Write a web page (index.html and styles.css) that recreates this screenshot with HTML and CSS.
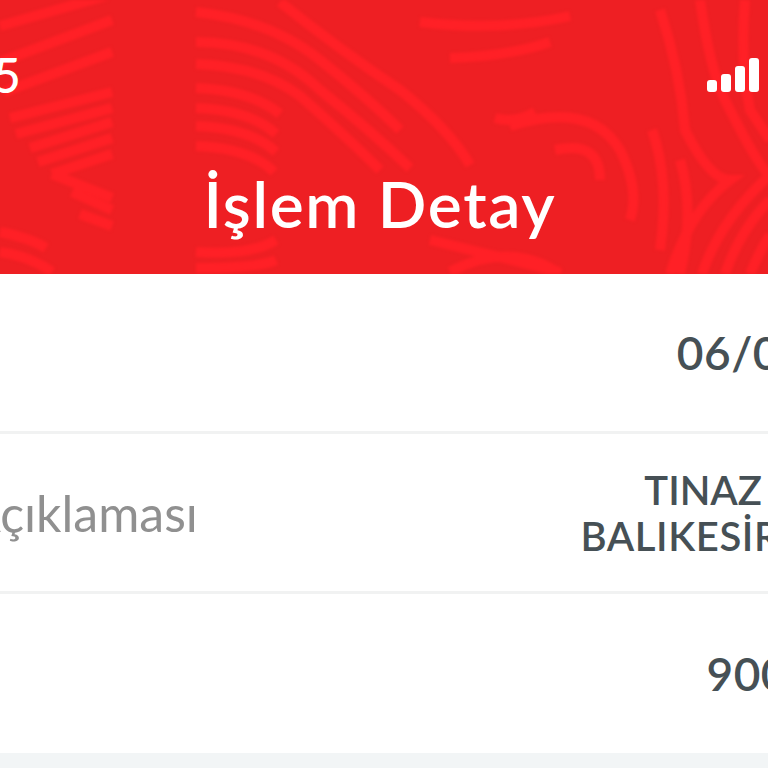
FILE: index.html
```html
<!DOCTYPE html>
<html lang="tr">
<head>
    <meta charset="UTF-8">
    <meta name="viewport" content="width=device-width, initial-scale=1.0">
    <title>İşlem Detay</title>
    <link rel="stylesheet" href="styles.css">
</head>
<body>
    <div class="screen">
        <header class="header">
            <svg class="header-pattern" width="800" height="274" viewBox="0 0 800 274" fill="none">
                <g stroke="#ff2026" stroke-width="10">
                    <path d="M20 26 L132 -6"/>
                    <path d="M20 62 L132 20"/>
                    <path d="M24 92 L132 52"/>
                    <path d="M30 118 L132 92"/>
                    <path d="M36 134 L132 108"/>
                    <path d="M50 148 L132 122"/>
                    <path d="M58 162 L132 138"/>
                    <path d="M72 174 L132 154 M72 174 L132 198"/>
                    <path d="M92 192 L132 210"/>
                    <path d="M100 214 L132 226"/>
                    <path d="M20 232 Q50 238 66 248"/>
                    <path d="M20 252 Q50 256 72 272"/>
                    <path d="M216 12 Q290 20 340 60 Q390 100 420 130"/>
                    <path d="M216 42 Q290 42 340 90 Q390 130 430 168"/>
                    <path d="M216 64 Q280 66 320 96 Q370 140 400 170"/>
                    <path d="M216 88 Q270 90 300 114"/>
                    <path d="M216 108 Q270 110 296 134"/>
                    <path d="M216 126 Q270 128 296 152"/>
                    <path d="M216 146 Q270 148 294 172"/>
                    <path d="M216 252 Q270 256 296 240"/>
                    <path d="M216 268 Q280 268 296 260"/>
                    <path d="M300 2 Q360 50 420 90 Q470 130 490 165"/>
                    <path d="M440 22 Q520 32 590 16"/>
                    <path d="M470 58 Q530 56 570 42"/>
                    <path d="M515 118 Q535 124 555 112"/>
                    <path d="M530 126 Q610 100 640 150 Q660 190 650 220"/>
                    <path d="M575 150 Q620 140 620 180"/>
                    <path d="M672 130 Q690 180 680 250"/>
                    <path d="M700 160 Q715 210 700 274"/>
                    <path d="M680 10 Q700 70 705 130 Q730 180 750 180 Q710 210 690 274"/>
                    <path d="M720 0 Q730 70 745 100 Q780 170 790 175 Q740 220 722 274"/>
                    <path d="M765 0 Q760 60 770 110 L790 140"/>
                    <path d="M745 274 Q760 230 790 200"/>
                    <path d="M770 274 Q780 250 790 235"/>
                    <path d="M470 272 Q530 240 580 274 M450 240 L580 272"/>
                </g>
            </svg>
            <div class="status-bar">
                <span class="status-time">5</span>
                <div class="signal">
                    <span class="signal-bar bar-1"></span>
                    <span class="signal-bar bar-2"></span>
                    <span class="signal-bar bar-3"></span>
                    <span class="signal-bar bar-4"></span>
                </div>
            </div>
            <h1 class="title">İşlem Detay</h1>
        </header>

        <div class="detail-row">
            <div class="detail-label"></div>
            <div class="detail-value value-large">06/0</div>
        </div>
        <div class="detail-row">
            <div class="detail-label label-clipped">Açıklaması</div>
            <div class="detail-value">
                <div class="value-line-short">TINAZ</div>
                <div class="value-line-long">BALIKESİR</div>
            </div>
        </div>
        <div class="detail-row">
            <div class="detail-label"></div>
            <div class="detail-value value-large value-amount">900</div>
        </div>
        <div class="footer-area"></div>
    </div>
</body>
</html>
```

FILE: styles.css
```css
html, body {
    margin: 0;
    padding: 0;
    height: 100%;
    overflow: hidden;
    background-color: #fff;
    font-family: 'Lato', 'Noto Sans', sans-serif;
}

.screen {
    width: 800px;
    height: 768px;
    margin-left: -20px;
    display: flex;
    flex-direction: column;
}

.header {
    position: relative;
    height: 274px;
    flex-shrink: 0;
    background-color: #ee1f23;
    color: #fff;
    overflow: hidden;
}

.header-pattern {
    position: absolute;
    top: 0;
    left: 0;
    filter: blur(1.5px);
}

.status-bar {
    position: relative;
    display: flex;
    justify-content: space-between;
    align-items: flex-end;
    height: 92px;
    padding: 0 21px 0 13px;
}

.status-time {
    font-size: 48px;
    line-height: 46px;
    font-weight: 500;
    margin-bottom: -6px;
}

.signal {
    display: flex;
    align-items: flex-end;
    gap: 4px;
}

.signal-bar {
    width: 10px;
    background-color: #fff;
    border-radius: 3px;
}

.bar-1 { height: 12px; }
.bar-2 { height: 18px; }
.bar-3 { height: 26px; }
.bar-4 { height: 34px; }

.title {
    position: relative;
    margin: 74px 0 0;
    font-size: 64px;
    line-height: 76px;
    font-weight: 600;
    letter-spacing: 1.7px;
    text-align: center;
}

.detail-row {
    height: 157px;
    flex-shrink: 0;
    display: flex;
    justify-content: space-between;
    align-items: center;
    border-bottom: 3px solid #f1f2f2;
}

.detail-row:nth-last-child(2) {
    height: 159px;
    border-bottom: none;
}

.detail-label {
    font-size: 50px;
    font-weight: 400;
    color: #909090;
}

.label-clipped {
    margin-left: -13px;
}

.detail-value {
    font-size: 40px;
    line-height: 46px;
    font-weight: 600;
    color: #465055;
    text-align: right;
    white-space: nowrap;
}

.value-large {
    font-size: 46px;
    letter-spacing: 0.5px;
}

.value-amount {
    margin-right: -8px;
}

.value-line-short {
    padding-right: 18px;
}

.value-line-long {
    letter-spacing: 0.6px;
}

.footer-area {
    flex: 1;
    background-color: #f2f5f6;
}
```
